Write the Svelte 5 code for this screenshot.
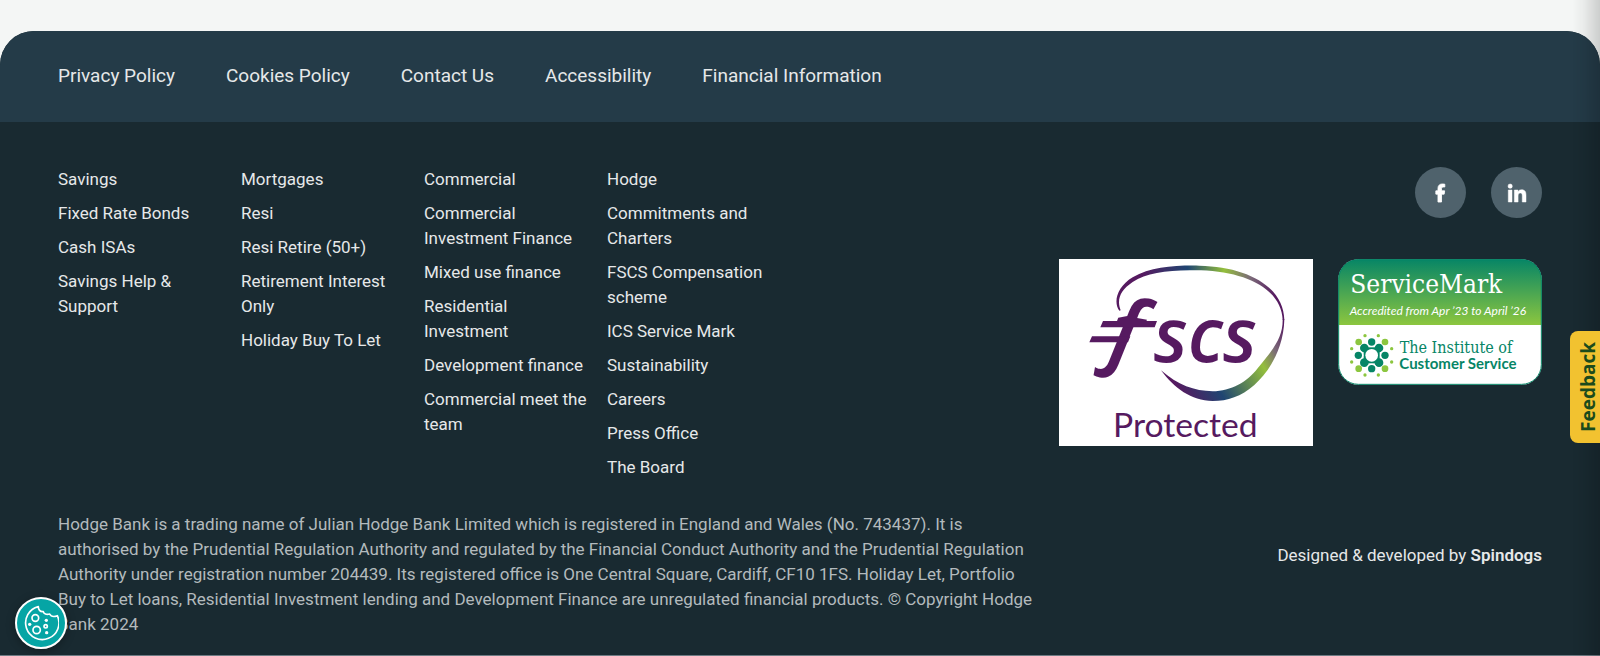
<script>
  const policyLinks = [
    'Privacy Policy',
    'Cookies Policy',
    'Contact Us',
    'Accessibility',
    'Financial Information'
  ];

  const columns = [
    ['Savings', 'Fixed Rate Bonds', 'Cash ISAs', 'Savings Help & Support'],
    ['Mortgages', 'Resi', 'Resi Retire (50+)', 'Retirement Interest Only', 'Holiday Buy To Let'],
    [
      'Commercial',
      'Commercial Investment Finance',
      'Mixed use finance',
      'Residential Investment',
      'Development finance',
      'Commercial meet the team'
    ],
    [
      'Hodge',
      'Commitments and Charters',
      'FSCS Compensation scheme',
      'ICS Service Mark',
      'Sustainability',
      'Careers',
      'Press Office',
      'The Board'
    ]
  ];
</script>

<footer class="footer">
  <nav class="policy" aria-label="Policies">
    {#each policyLinks as label}
      <a href="#top">{label}</a>
    {/each}
  </nav>

  <div class="main">
    <nav class="columns" aria-label="Footer">
      {#each columns as links}
        <ul>
          {#each links as label}
            <li><a href="#top">{label}</a></li>
          {/each}
        </ul>
      {/each}
    </nav>

    <div class="aside">
      <div class="social">
        <a href="#top" aria-label="Facebook">
          <svg viewBox="0 0 320 512" width="18" height="18">
            <path
              stroke="#fff"
              stroke-width="24"
              d="M250 288l14-93h-89v-60c0-25 12-50 52-50h41V6s-37-6-72-6c-74 0-122 44-122 125v70H13v93h61v224h101V288z"
            />
          </svg>
        </a>
        <a href="#top" aria-label="LinkedIn">
          <svg viewBox="0 0 448 448" width="18" height="18">
            <path
              stroke="#fff"
              stroke-width="12"
              d="M100 448H7V149h93zM54 108a54 54 0 1 1 0-108 54 54 0 0 1 0 108zM448 448h-93V302c0-35-1-79-48-79-49 0-56 38-56 77v148h-93V149h89v41h1c13-24 43-48 88-48 94 0 112 62 112 142z"
            />
          </svg>
        </a>
      </div>

      <div class="badges">
        <svg class="fscs" viewBox="54 27 762 561" role="img" aria-label="FSCS Protected">
          <defs>
            <linearGradient id="swoosh-top" gradientUnits="userSpaceOnUse" x1="230" y1="0" x2="729" y2="0">
              <stop offset="0.15" stop-color="#561a60" />
              <stop offset="0.42" stop-color="#1f4571" />
              <stop offset="0.64" stop-color="#94bf3c" />
              <stop offset="0.8" stop-color="#7b6a78" />
              <stop offset="0.95" stop-color="#561a60" />
            </linearGradient>
            <linearGradient id="swoosh-bottom" gradientUnits="userSpaceOnUse" x1="400" y1="440" x2="740" y2="240">
              <stop offset="0.05" stop-color="#561a60" />
              <stop offset="0.32" stop-color="#1f4571" />
              <stop offset="0.7" stop-color="#94bf3c" />
              <stop offset="0.84" stop-color="#7b6a78" />
              <stop offset="1" stop-color="#561a60" />
            </linearGradient>
          </defs>
          <rect x="54" y="27" width="762" height="561" fill="#fff" />
          <path
            fill="url(#swoosh-top)"
            d="M235 182C216 157 228 110 275 82C330 50 400 46 475 47C620 50 728 110 730 210H725C722 120 620 66 480 61C390 58 320 66 275 96C236 122 227 150 239 181Z"
          />
          <path
            fill="url(#swoosh-bottom)"
            d="M730 208C728 300 680 370 640 405C600 440 560 453 515 453C450 452 400 415 360 361C410 405 460 423 515 424C570 424 620 395 650 355C700 295 726 260 725 208Z"
          />
          <g fill="#561a60">
            <text class="mark" x="182" y="332" font-size="268" transform="rotate(10 268 256)">ƒ</text>
            <path d="M186 213H348L341 232H178zM153 259H268L261 277H145z" />
            <text class="scs" x="338" y="336" font-size="226">scs</text>
            <text class="protected" x="216" y="562" font-size="101">Protected</text>
          </g>
        </svg>

        <svg class="servicemark" viewBox="53 57 612 378" role="img" aria-label="ServiceMark, The Institute of Customer Service">
          <defs>
            <linearGradient id="mark-green" x1="0" y1="0" x2="0" y2="1">
              <stop offset="0" stop-color="#068566" />
              <stop offset="1" stop-color="#8cc63f" />
            </linearGradient>
            <clipPath id="mark-clip">
              <rect x="54" y="58" width="610" height="376" rx="60" />
            </clipPath>
          </defs>
          <g clip-path="url(#mark-clip)">
            <rect x="53" y="57" width="612" height="378" fill="#fff" />
            <rect x="53" y="57" width="612" height="198" fill="url(#mark-green)" />
          </g>
          <rect x="55" y="59" width="608" height="374" rx="59" fill="none" stroke="#068566" stroke-width="3" />
          <text class="slab" x="90" y="158" font-size="78" fill="#fff">ServiceMark</text>
          <text class="accredited" x="88" y="224" font-size="36" fill="#fff">Accredited from Apr ’23 to April ’26</text>
          <g fill="#068566">
            <circle cx="132" cy="324" r="13" />
            <circle cx="176" cy="324" r="13" />
            <circle cx="132" cy="368" r="13" />
            <circle cx="176" cy="368" r="13" />
            <rect x="130" y="322" width="48" height="48" />
          </g>
          <g fill="#fff">
            <circle cx="154" cy="346" r="19" />
            <circle cx="154" cy="306" r="15" />
            <circle cx="114" cy="346" r="15" />
            <circle cx="194" cy="346" r="15" />
            <circle cx="154" cy="386" r="15" />
          </g>
          <g fill="#068566">
            <circle cx="154" cy="306" r="11" />
            <circle cx="114" cy="346" r="11" />
            <circle cx="194" cy="346" r="11" />
            <circle cx="154" cy="386" r="11" />
          </g>
          <g fill="#8cc63f">
            <circle cx="115" cy="306" r="10" />
            <circle cx="194" cy="306" r="10" />
            <circle cx="115" cy="386" r="10" />
            <circle cx="194" cy="386" r="10" />
            <circle cx="134" cy="287" r="5" />
            <circle cx="174" cy="287" r="5" />
            <circle cx="94" cy="326" r="5" />
            <circle cx="214" cy="326" r="5" />
            <circle cx="94" cy="366" r="5" />
            <circle cx="214" cy="366" r="5" />
            <circle cx="134" cy="405" r="5" />
            <circle cx="174" cy="405" r="5" />
          </g>
          <text class="slab" x="238" y="340" font-size="48" fill="#068566">The Institute of</text>
          <text class="customer" x="237" y="388" font-size="45" fill="#068566">Customer Service</text>
        </svg>
      </div>
    </div>
  </div>

  <div class="legal">
    <p class="small-print">
      Hodge Bank is a trading name of Julian Hodge Bank Limited which is registered in England and
      Wales (No. 743437). It is authorised by the Prudential Regulation Authority and regulated by
      the Financial Conduct Authority and the Prudential Regulation Authority under registration
      number 204439. Its registered office is One Central Square, Cardiff, CF10 1FS. Holiday Let,
      Portfolio Buy to Let loans, Residential Investment lending and Development Finance are
      unregulated financial products. © Copyright Hodge Bank 2024
    </p>
    <p class="credit">Designed &amp; developed by <a href="#top">Spindogs</a></p>
  </div>
</footer>

<div class="edge-shadow"></div>

<button class="feedback" type="button">Feedback</button>

<button class="cookies" type="button" aria-label="Cookie settings">
  <svg viewBox="70 74 108 108" width="36" height="36">
    <g fill="none" stroke="#fff" stroke-width="5" stroke-linejoin="round">
      <path d="M116 79A50 50 0 1 0 173 106C163 110 154 109 150 101C140 104 133 101 131 94C121 95 116 88 116 79Z" />
      <circle cx="107" cy="113" r="10" />
      <circle cx="111" cy="149" r="11" />
      <circle cx="138" cy="138" r="5" />
    </g>
    <g fill="#fff">
      <circle cx="90" cy="132" r="5" />
      <circle cx="140" cy="120" r="5" />
      <circle cx="141" cy="157" r="5" />
    </g>
  </svg>
</button>

<style>
  :global(body) {
    margin: 0;
    background: #f4f6f5;
    font-family: Roboto, sans-serif;
  }

  .footer {
    margin-top: 31px;
    border-radius: 34px 34px 0 0;
    border-bottom: 1px solid #6d7a83;
    background: #192a31;
    color: #e6e8e9;
    font-size: 17px;
    line-height: 25px;
    overflow: hidden;
  }

  a {
    color: inherit;
    text-decoration: none;
  }

  a:hover {
    text-decoration: underline;
  }

  .policy {
    display: flex;
    flex-wrap: wrap;
    gap: 51px;
    padding: 32px 58px 34px;
    background: #243b48;
    font-size: 19px;
  }

  .main {
    display: flex;
    justify-content: space-between;
    padding: 45px 58px 0;
  }

  .columns {
    display: grid;
    grid-template-columns: repeat(4, 163px);
    gap: 20px;
  }

  ul {
    display: flex;
    flex-direction: column;
    gap: 9px;
    margin: 0;
    padding: 0;
    list-style: none;
  }

  .aside {
    display: flex;
    flex-direction: column;
    align-items: flex-end;
    gap: 41px;
  }

  .social {
    display: flex;
    gap: 25px;
  }

  .social a {
    display: flex;
    align-items: center;
    justify-content: center;
    width: 51px;
    height: 51px;
    border-radius: 50%;
    background: #4f626c;
  }

  .social svg {
    overflow: visible;
  }

  .social path {
    fill: #fff;
  }

  .badges {
    display: flex;
    align-items: flex-start;
    gap: 25px;
  }

  .fscs {
    width: 254px;
    height: 187px;
  }

  .servicemark {
    width: 204px;
    height: 126px;
  }

  .mark,
  .scs {
    font-family: 'Open Sans', sans-serif;
    font-style: italic;
    font-weight: 600;
  }

  .protected {
    font-family: Lato, sans-serif;
  }

  .slab {
    font-family: 'DejaVu Serif Condensed', 'DejaVu Serif', serif;
  }

  .accredited {
    font-family: Lato, sans-serif;
    font-style: italic;
  }

  .customer {
    font-family: Lato, sans-serif;
    font-weight: 700;
  }

  .legal {
    display: flex;
    align-items: flex-start;
    justify-content: space-between;
    gap: 60px;
    padding: 32px 58px 18px;
  }

  .legal p {
    margin: 0;
  }

  .small-print {
    max-width: 976px;
    color: #b3babd;
  }

  .legal .credit {
    margin-top: 31px;
    white-space: nowrap;
  }

  .credit a {
    font-weight: 600;
  }

  .edge-shadow {
    position: fixed;
    top: 0;
    right: 0;
    bottom: 0;
    width: 28px;
    background: linear-gradient(to left, rgba(0, 0, 0, 0.16), rgba(0, 0, 0, 0.04) 60%, transparent);
    pointer-events: none;
  }

  .feedback {
    position: fixed;
    top: 331px;
    right: -6px;
    width: 36px;
    height: 112px;
    padding: 0;
    border: none;
    border-radius: 0 8px 8px 0;
    background: #f2c230;
    color: #1c4b1c;
    font-family: 'Open Sans', sans-serif;
    font-size: 19px;
    font-weight: 700;
    line-height: 20px;
    writing-mode: vertical-rl;
    transform: rotate(180deg);
    cursor: pointer;
  }

  .cookies {
    display: flex;
    align-items: center;
    justify-content: center;
    position: fixed;
    bottom: 7px;
    left: 15px;
    width: 52px;
    height: 52px;
    padding: 0;
    border: 2px solid #fff;
    border-radius: 50%;
    background: #06a5a5;
    box-shadow: 0 2px 10px rgba(0, 0, 0, 0.3);
    cursor: pointer;
  }

  .cookies svg {
    flex: none;
  }
</style>
